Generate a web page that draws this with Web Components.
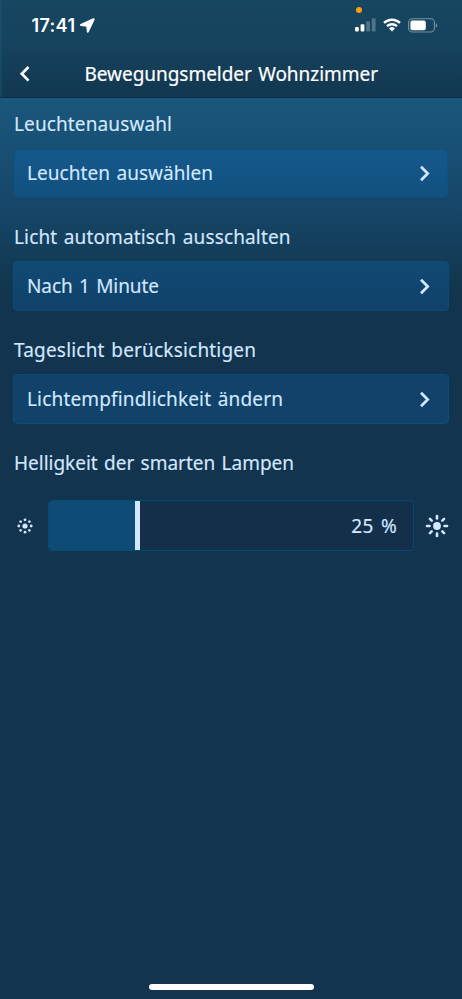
<!DOCTYPE html>
<html lang="de"><head><meta charset="utf-8"><title>Bewegungsmelder Wohnzimmer</title>
<style>html,body{margin:0;height:100%;overflow:hidden;background:#12344f}</style></head>
<body>
<motion-settings></motion-settings>
<script>
const define=(name,html,init)=>{
  customElements.define(name,class extends HTMLElement{
    connectedCallback(){
      if(this.shadowRoot)return;
      this.attachShadow({mode:'open'}).innerHTML=html;
      if(init)init.call(this,this.shadowRoot);
    }
  });
};

// Text run whose letter spacing is set so that it fills the given width.
define('tracked-text',`<style>:host{display:inline-block;white-space:nowrap;flex:none}span{display:inline-block;word-spacing:1.5px}</style><span></span>`,function(r){
  const s=r.querySelector('span'),t=this.getAttribute('text')||'';
  s.textContent=t;
  const w=s.getBoundingClientRect().width,target=parseFloat(this.getAttribute('fit'));
  s.style.letterSpacing=((target-w)/(t.length-1)).toFixed(3)+'px';
  this.style.width=target+'px';
});

define('status-bar',`<style>
:host{display:flex;height:49px;align-items:center;padding:1px 24px 0 31.5px;box-sizing:border-box;color:#fff;font:600 18px Inter,sans-serif;position:relative}
svg{display:block;flex:none}.loc{margin-left:5px}.sig{margin-left:auto}.wifi{margin-left:7px}.bat{margin-left:7px}
i{position:absolute;left:356px;top:6.5px;width:6.4px;height:6.4px;border-radius:50%;background:#ff9f0a}
</style><tracked-text text="17:41" fit="43.5"></tracked-text>
<svg class="loc" width="15" height="15" viewBox="0 0 15 15"><path d="M13.4.9.9 6.5q-.8.5.2.8l5.8.8.5 5.6q.3 1 .8.1L14 1.5q.2-.8-.6-.6Z" fill="#fff" stroke="#fff" stroke-width="1.2"/></svg>
<svg class="sig" width="21" height="14" viewBox="0 0 21 14"><g fill="#fff"><rect y="9" width="3.8" height="4.6" rx="1"/><rect x="5.6" y="6.2" width="3.8" height="7.4" rx="1"/><g opacity=".25"><rect x="11.2" y="3.2" width="3.8" height="10.4" rx="1"/><rect x="16.8" y=".3" width="3.8" height="13.3" rx="1"/></g></g></svg>
<svg class="wifi" width="18" height="14" viewBox="0 0 18 14"><g fill="none" stroke="#fff" stroke-width="2.4"><path d="M1 4.9a11.6 11.6 0 0 1 16 0"/><path d="M4 8.2a7.4 7.4 0 0 1 10 0"/></g><path d="M6 10.5a4.4 4.4 0 0 1 6 0L9 13.6Z" fill="#fff"/></svg>
<svg class="bat" width="30" height="15" viewBox="0 0 30 15"><rect x=".6" y=".8" width="25.8" height="13.2" rx="3.8" fill="none" stroke="#fff" stroke-opacity=".42" stroke-width="1.1"/><rect x="2.4" y="2.5" width="15.4" height="9.8" rx="2" fill="#fff"/><path d="M27.8 5.2q1.5.7 1.5 2.2t-1.5 2.2Z" fill="#fff" fill-opacity=".42"/></svg><i></i>`);

define('title-bar',`<style>
:host{display:grid;grid-template-columns:84.5px 1fr;height:48px;align-items:center;color:#fff;font:19px "Noto Sans",sans-serif}
svg{display:block;margin-left:19px}tracked-text{padding-top:2px;-webkit-text-stroke:.2px #fff}
</style><svg width="12" height="17" viewBox="0 0 12 17"><path d="M9.5 2 2.8 8.8l6.7 6.8" fill="none" stroke="#fff" stroke-width="2.7"/></svg><tracked-text text="Bewegungsmelder Wohnzimmer" fit="293.5"></tracked-text>`);

define('app-header',`<style>
:host{display:block;height:98px;box-sizing:border-box;border-bottom:1px solid #0c2d45;background:linear-gradient(90deg,#19597e66 2px,transparent 2px),linear-gradient(#174661,#16435e 45%,#123750)}
</style><status-bar></status-bar><title-bar></title-bar>`);

define('section-heading',`<style>:host{display:flex;height:26px;align-items:center;padding-left:14px;color:#d3e7ff}</style>`,function(r){
  const t=document.createElement('tracked-text');
  t.setAttribute('text',this.getAttribute('text'));
  t.setAttribute('fit',this.getAttribute('fit'));
  r.append(t);
});

define('nav-row',`<style>
:host{display:flex;height:49.5px;margin:0 13px;box-sizing:border-box;align-items:center;justify-content:space-between;padding:0 17.5px 0 13px;border:1px solid #0b4d77;border-radius:4px;background:var(--row,#10426a);color:#d3e7ff}
svg{display:block}
</style><slot></slot><svg width="12" height="17" viewBox="0 0 12 17"><path d="m2 1.8 6.7 6.7L2 15.2" fill="none" stroke="#d3e7ff" stroke-width="2.7"/></svg>`);

define('sun-icon',`<style>:host{display:block}svg{display:block;overflow:visible}</style><svg width="24" height="24" viewBox="-12 -12 24 24" fill="#d3e7ff"></svg>`,function(r){
  const dim=this.hasAttribute('dim');
  let s=`<circle r="${dim?2.6:3.9}"/>`;
  for(let a=0;a<360;a+=45){
    s+=dim?`<circle cx="6.2" r="1.4" transform="rotate(${a})"/>`
          :`<path d="M7.5 0H10" transform="rotate(${a})" stroke="#d3e7ff" stroke-width="2.6" stroke-linecap="round"/>`;
  }
  r.querySelector('svg').innerHTML=s;
});

define('level-slider',`<style>
:host{display:grid;grid-template-columns:24px 365.5px 24px;column-gap:11.5px;align-items:center;padding-left:12.7px;color:#d3e7ff}
.track{display:flex;height:51px;box-sizing:border-box;border:1px solid #064b73;border-radius:4px;overflow:hidden;background:#132f49;align-items:center}
.fill{width:86px;height:100%;background:#0e4c76}.knob{width:5px;height:100%;background:#d3e7ff}
tracked-text{margin-left:auto;margin-right:16px}
</style><sun-icon dim></sun-icon><div class="track"><div class="fill"></div><div class="knob"></div><tracked-text text="25 %" fit="45.5"></tracked-text></div><sun-icon></sun-icon>`);

define('home-indicator',`<style>:host{display:block;width:165px;height:5.6px;border-radius:3px;background:#fff;margin:auto auto 9px 148.5px}</style>`);

define('motion-settings',`<style>
:host{display:flex;flex-direction:column;width:462px;height:999px;background:#12344f}
main{flex:1;display:flex;flex-direction:column;padding-top:12.5px;font:19px "Noto Sans",sans-serif;-webkit-text-stroke:.15px #d3e7ff;background:linear-gradient(#1a577b 0,#184f73 55px,#164669 110px,#123952 175px,#12344f 200px)}
section{display:grid;grid-template-rows:26px 49.5px;row-gap:11.9px;height:113px;align-content:start}
.first{--row:linear-gradient(#14588a,#115180)}.second{--row:linear-gradient(#114a75,#104169)}
.first nav-row{height:48px;margin:.7px 14px 0;padding:0 16.5px 0 12px;border-color:#0d5282}
.level{grid-template-rows:26px 51px;row-gap:24.5px}
</style><app-header></app-header><main>
<section class="first"><section-heading text="Leuchtenauswahl" fit="158"></section-heading><nav-row><tracked-text text="Leuchten auswählen" fit="186"></tracked-text></nav-row></section>
<section class="second"><section-heading text="Licht automatisch ausschalten" fit="276.5"></section-heading><nav-row><tracked-text text="Nach 1 Minute" fit="132"></tracked-text></nav-row></section>
<section><section-heading text="Tageslicht berücksichtigen" fit="242"></section-heading><nav-row><tracked-text text="Lichtempfindlichkeit ändern" fit="256"></tracked-text></nav-row></section>
<section class="level"><section-heading text="Helligkeit der smarten Lampen" fit="280"></section-heading><level-slider></level-slider></section>
<home-indicator></home-indicator></main>`);
</script></body></html>
